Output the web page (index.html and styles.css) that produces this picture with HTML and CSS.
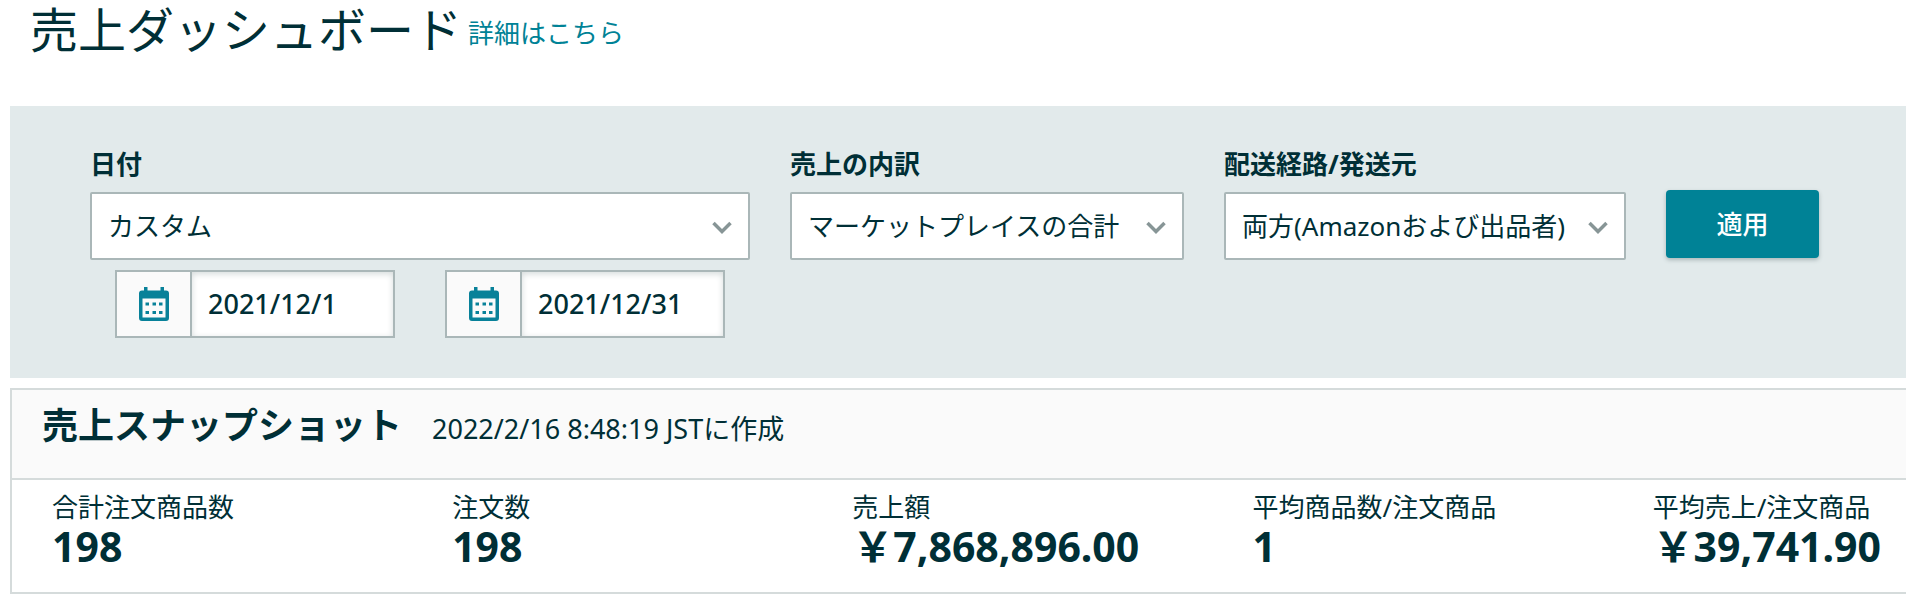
FILE: index.html
```html
<!DOCTYPE html>
<html lang="ja">
<head>
<meta charset="utf-8">
<meta name="viewport" content="width=device-width, initial-scale=1">
<title>売上ダッシュボード</title>
<link rel="stylesheet" href="styles.css">
</head>
<body>
<svg class="sprite" aria-hidden="true">
  <symbol id="chevron" viewBox="0 0 20 14">
    <path d="M1.5 2 10 10.500 18.500 2" fill="none" stroke="currentColor" stroke-width="3.500"/>
  </symbol>
  <symbol id="calendar" viewBox="0 0 30 34">
    <path fill="currentColor" fill-rule="evenodd" d="M5 0h3.500v3.500h13V0H25v3.500h2a3 3 0 0 1 3 3V31a3 3 0 0 1-3 3H3a3 3 0 0 1-3-3V6.500a3 3 0 0 1 3-3h2zM3.500 11.500V30.500h23v-19z"/>
    <path fill="currentColor" d="M6.500 15.500H10v3H6.500zM13.500 15.500H17v3h-3.500zM20 15.500h3.500v3H20zM6.500 24H10v3H6.500zM13.500 24H17v3h-3.500zM20 24h3.500v3H20z"/>
  </symbol>
</svg>

<header class="page-header">
  <h1 class="page-title">売上ダッシュボード</h1>
  <a class="page-link" href="#">詳細はこちら</a>
</header>

<main class="content">
  <form class="filters">
    <div class="filter filter-date">
      <label class="filter-label" for="date">日付</label>
      <div class="select">
        <select class="select-input" id="date"><option>カスタム</option></select>
        <svg class="select-arrow" aria-hidden="true"><use href="#chevron"/></svg>
      </div>
      <div class="date-range">
        <div class="date-field">
          <button class="date-button" type="button" aria-label="開始日を選択"><svg class="date-icon" aria-hidden="true"><use href="#calendar"/></svg></button>
          <input class="date-input" type="text" aria-label="開始日" value="2021/12/1">
        </div>
        <div class="date-field">
          <button class="date-button" type="button" aria-label="終了日を選択"><svg class="date-icon" aria-hidden="true"><use href="#calendar"/></svg></button>
          <input class="date-input" type="text" aria-label="終了日" value="2021/12/31">
        </div>
      </div>
    </div>
    <div class="filter filter-breakdown">
      <label class="filter-label" for="breakdown">売上の内訳</label>
      <div class="select">
        <select class="select-input" id="breakdown"><option>マーケットプレイスの合計</option></select>
        <svg class="select-arrow" aria-hidden="true"><use href="#chevron"/></svg>
      </div>
    </div>
    <div class="filter filter-channel">
      <label class="filter-label" for="channel">配送経路/発送元</label>
      <div class="select">
        <select class="select-input" id="channel"><option>両方(Amazonおよび出品者)</option></select>
        <svg class="select-arrow" aria-hidden="true"><use href="#chevron"/></svg>
      </div>
    </div>
    <button class="apply" type="submit">適用</button>
  </form>

  <section class="snapshot">
    <div class="snapshot-header">
      <h2 class="snapshot-title">売上スナップショット</h2>
      <span class="snapshot-time">2022/2/16 8:48:19 JSTに作成</span>
    </div>
    <dl class="metrics">
      <div class="metric"><dt class="metric-label">合計注文商品数</dt><dd class="metric-value">198</dd></div>
      <div class="metric"><dt class="metric-label">注文数</dt><dd class="metric-value">198</dd></div>
      <div class="metric"><dt class="metric-label">売上額</dt><dd class="metric-value">&#xFFE5;7,868,896.00</dd></div>
      <div class="metric"><dt class="metric-label">平均商品数/注文商品</dt><dd class="metric-value">1</dd></div>
      <div class="metric"><dt class="metric-label">平均売上/注文商品</dt><dd class="metric-value">&#xFFE5;39,741.90</dd></div>
    </dl>
  </section>
</main>
</body>
</html>
```
FILE: styles.css
```css
* {
  box-sizing: border-box;
}

body {
  margin: 0;
  background: #fff;
  color: #002f36;
  font: 26px/36px "Noto Sans", "Noto Sans CJK JP", sans-serif;
}

button,
input,
select {
  font: inherit;
  color: inherit;
}

.sprite {
  display: none;
}

.page-header {
  display: flex;
  align-items: flex-end;
  gap: 6px;
  padding: 0 30px 46px;
}

.page-title {
  margin: 0;
  font-size: 48px;
  font-weight: 400;
  line-height: 60px;
}

.page-link {
  color: #008296;
  line-height: 54px;
  text-decoration: none;
}

.content {
  display: flex;
  flex-direction: column;
  gap: 10px;
  padding-left: 10px;
}

.filters {
  display: flex;
  align-items: flex-start;
  gap: 40px;
  padding: 40px 87px 40px 80px;
  background: #e2eaeb;
}

.filter {
  display: flex;
  flex-direction: column;
  gap: 10px;
}

.filter-date {
  flex: 1;
  min-width: 0;
}

.filter-breakdown {
  flex: 0 0 394px;
}

.filter-channel {
  flex: 0 0 402px;
}

.filter-label {
  font-weight: 700;
}

.select {
  position: relative;
}

.select-input {
  appearance: none;
  display: block;
  width: 100%;
  height: 68px;
  padding: 0 40px 0 16px;
  border: 2px solid #aab7b8;
  border-radius: 2px;
  background: #fff;
}

.select-arrow {
  position: absolute;
  top: 29px;
  right: 18px;
  width: 20px;
  height: 14px;
  color: #879596;
  pointer-events: none;
}

.date-range {
  display: flex;
  gap: 50px;
  padding: 0 25px;
}

.date-field {
  display: flex;
  flex: 1;
  min-width: 0;
  height: 68px;
  border: 2px solid #aab7b8;
}

.date-button {
  display: grid;
  place-items: center;
  flex: 0 0 75px;
  padding: 0;
  border: 0;
  border-right: 2px solid #aab7b8;
  background: #fafafa;
  color: #088199;
}

.date-icon {
  width: 30px;
  height: 34px;
}

.date-input {
  flex: 1;
  min-width: 0;
  padding: 0 16px;
  border: 0;
  background: #fff;
  box-shadow: inset 0 2px 6px #d5dbdb;
  font-size: 27px;
  font-weight: 500;
}

.apply {
  flex: 0 0 153px;
  height: 68px;
  margin-top: 44px;
  padding: 0;
  border: 0;
  border-radius: 4px;
  background: #008296;
  box-shadow: 0 2px 4px #aab7b8;
  color: #fff;
  font-weight: 500;
}

.snapshot {
  border: 2px solid #d5dbdb;
  border-right: 0;
}

.snapshot-header {
  display: flex;
  align-items: baseline;
  gap: 30px;
  padding: 12px 30px 28px;
  border-bottom: 2px solid #d5dbdb;
  background: #fafafa;
}

.snapshot-title {
  margin: 0;
  font-size: 36px;
  line-height: 48px;
}

.snapshot-time {
  font-size: 27px;
}

.metrics {
  display: grid;
  grid-template-columns: repeat(4, 1fr) auto;
  margin: 0;
  padding: 9px 25px 25px 40px;
}

.metric-label {
  line-height: 36px;
}

.metric-value {
  margin: 0;
  font-size: 41px;
  font-weight: 700;
  line-height: 42px;
}
```
